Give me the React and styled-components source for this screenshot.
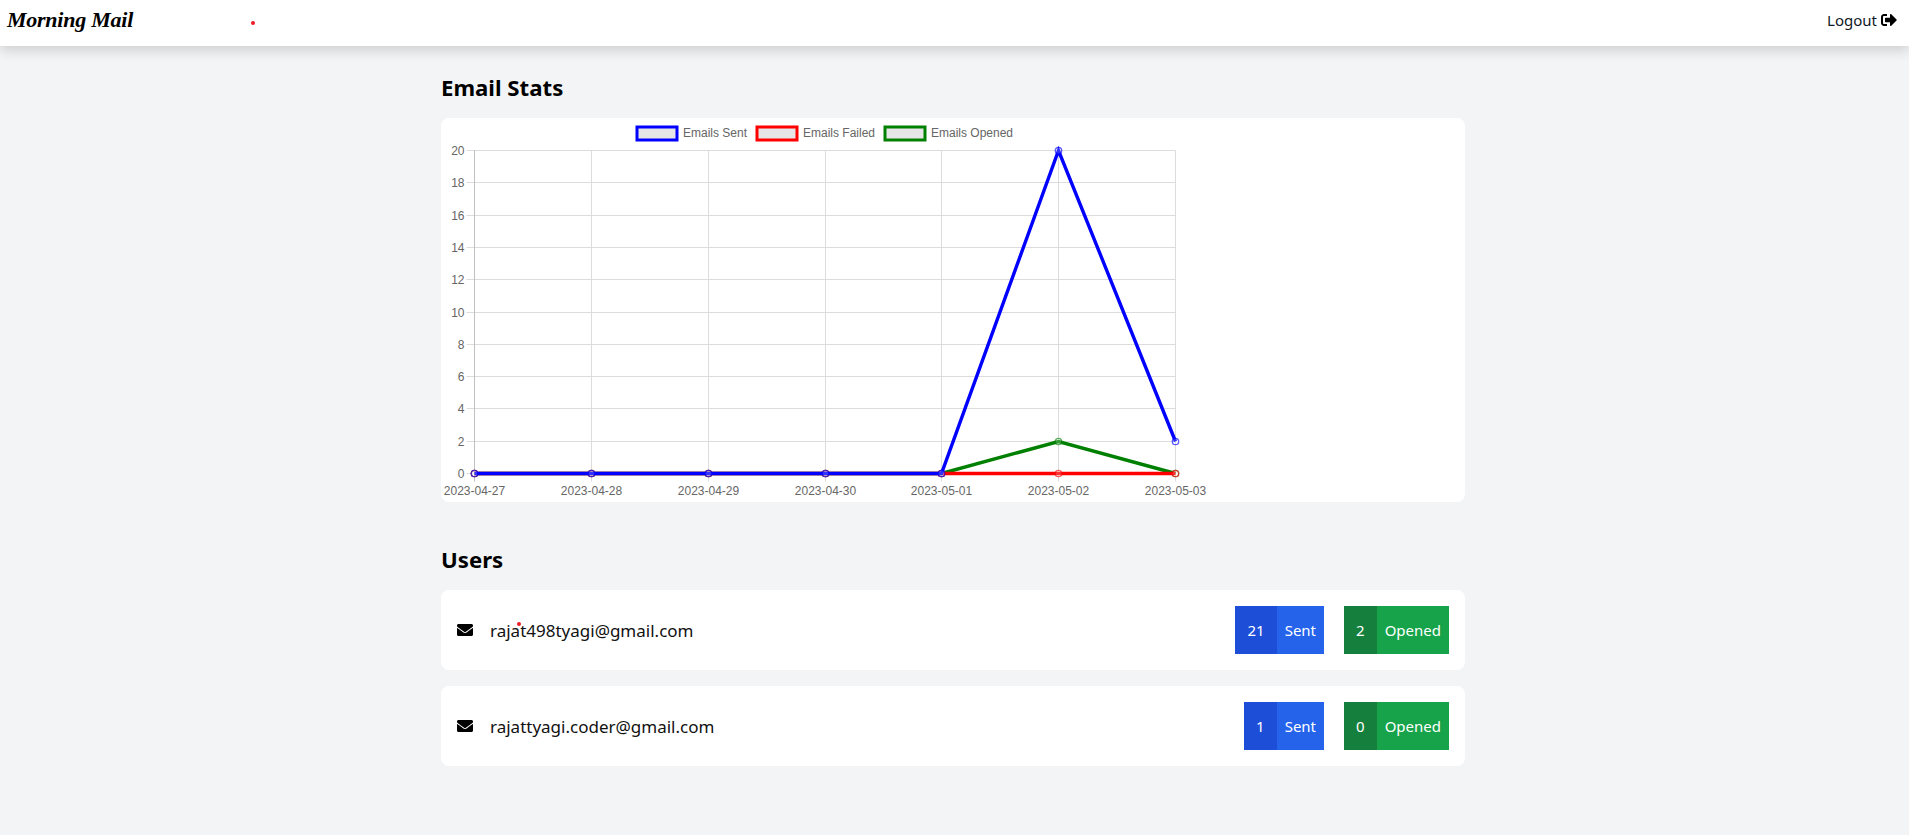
import React from "react";
import styled, { createGlobalStyle } from "styled-components";
import { FaEnvelope, FaSignOutAlt } from "react-icons/fa";

const Global = createGlobalStyle`
  html, body { margin: 0; padding: 0; background: #f3f4f6; }
  body { font-family: "Noto Sans", "Open Sans", sans-serif; color: #000; }
  * { box-sizing: border-box; }
`;

const Page = styled.div`
  position: relative;
  height: 835px;
  overflow: hidden;
`;
const Nav = styled.nav`
  height: 46px;
  background: #fff;
  box-shadow: 0 4px 12px rgba(0, 0, 0, 0.16);
  display: flex;
  align-items: center;
  justify-content: space-between;
  padding: 0 12px 6px 7px;
`;
const Logo = styled.div`
  font-family: "Liberation Serif", serif;
  font-style: italic;
  font-weight: 700;
  font-size: 22px;
  letter-spacing: -0.25px;
  color: #000;
`;
const Logout = styled.div`
  display: flex;
  align-items: center;
  gap: 4px;
  font-size: 15px;
  color: #111827;
  svg { width: 16px; height: 16px; color: #000; }
`;
const Main = styled.main`
  width: 1024px;
  margin-left: 441px;
  padding-top: 26px;
`;
const Title = styled.h2`
  margin: 0 0 14px;
  font-size: 22.2px;
  line-height: 32px;
  font-weight: 700;
`;
const ChartCard = styled.section`
  height: 384px;
  background: #fff;
  border-radius: 8px;
  margin-bottom: 42px;
  svg { display: block; }
`;
const Rows = styled.div`
  display: flex;
  flex-direction: column;
  gap: 16px;
`;
const Row = styled.div`
  height: 80px;
  background: #fff;
  border-radius: 8px;
  display: flex;
  align-items: center;
  padding: 0 16px;
`;
const Mail = styled.div`
  display: flex;
  align-items: center;
  gap: 17px;
  flex: 1;
  font-size: 17px;
  color: #111;
  svg { width: 16px; height: 16px; color: #000; }
`;
const Badges = styled.div`
  display: flex;
  gap: 20px;
`;
const Badge = styled.div`
  display: flex;
  height: 48px;
  line-height: 48px;
  color: #fff;
  font-size: 15px;
`;
const Num = styled.span`
  min-width: 32px;
  padding: 0 12px;
  text-align: center;
  background: ${p => p.$bg};
`;
const Label = styled.span`
  padding: 0 8px;
  background: ${p => p.$bg};
`;
const Dot = styled.span`
  position: absolute;
  left: ${p => p.$x}px;
  top: ${p => p.$y}px;
  width: 4px;
  height: 4px;
  border-radius: 50%;
  background: #ee1c25;
`;

const ox = 441, oy = 118;
const xs = [474.5, 591.5, 708.5, 825.5, 941.5, 1058.5, 1175.5].map(v => v - ox);
const y0 = 473.5 - oy, yTop = 150.5 - oy;
const val = v => Math.floor(y0 - (v / 20) * (y0 - yTop)) + 0.5;
const dates = ["2023-04-27","2023-04-28","2023-04-29","2023-04-30","2023-05-01","2023-05-02","2023-05-03"];
const ticks = [0,2,4,6,8,10,12,14,16,18,20];
const series = [
  { c: "#008000", d: [0,0,0,0,0,2,0] },
  { c: "#ff0000", d: [0,0,0,0,0,0,0] },
  { c: "#0000ff", d: [0,0,0,0,0,20,2] },
];
const legend = [
  { x: 637, tx: 683, c: "#0000ff", t: "Emails Sent" },
  { x: 757, tx: 803, c: "#ff0000", t: "Emails Failed" },
  { x: 885, tx: 931, c: "#008000", t: "Emails Opened" },
];

function Chart() {
  const f = { fontFamily: "Liberation Sans, Arial, sans-serif", fontSize: 12, fill: "#666" };
  return (
    <svg width="1024" height="384" viewBox="0 0 1024 384">
      {ticks.map(t => (
        <line key={t} x1={xs[0] - 8} x2={xs[6]} y1={val(t)} y2={val(t)} stroke="#dcdcdc" />
      ))}
      {xs.map((x, i) => (
        <line key={i} x1={x} x2={x} y1={yTop} y2={y0 + 8} stroke={i === 0 ? "#c0c0c0" : "#dcdcdc"} />
      ))}
      {ticks.map(t => (
        <text key={t} {...f} x={xs[0] - 10} y={val(t) + 4} textAnchor="end">{t}</text>
      ))}
      {dates.map((d, i) => (
        <text key={d} {...f} x={xs[i]} y={377} textAnchor="middle">{d}</text>
      ))}
      {legend.map(l => (
        <g key={l.t}>
          <rect x={l.x - ox} y={127 - oy} width={40} height={13} fill="#e6e6e6" stroke={l.c} strokeWidth="3" />
          <text {...f} x={l.tx - ox} y={137 - oy}>{l.t}</text>
        </g>
      ))}
      {series.map(s => (
        <g key={s.c}>
          <polyline
            fill="none"
            stroke={s.c}
            strokeWidth="3.4"
            strokeLinejoin="miter"
            points={s.d.map((v, i) => `${xs[i]},${val(v)}`).join(" ")}
          />
          {s.d.map((v, i) => (
            <circle key={i} cx={xs[i]} cy={val(v)} r="3.2" fill="rgba(255,255,255,0.2)" stroke={s.c} strokeOpacity="0.65" strokeWidth="1.3" />
          ))}
        </g>
      ))}
    </svg>
  );
}

const users = [
  { email: "rajat498tyagi@gmail.com", sent: 21, opened: 2 },
  { email: "rajattyagi.coder@gmail.com", sent: 1, opened: 0 },
];

export default function App() {
  return (
    <Page>
      <Global />
      <Nav>
        <Logo>Morning Mail</Logo>
        <Logout>Logout <FaSignOutAlt /></Logout>
      </Nav>
      <Main>
        <Title>Email Stats</Title>
        <ChartCard><Chart /></ChartCard>
        <Title>Users</Title>
        <Rows>
          {users.map(u => (
            <Row key={u.email}>
              <Mail><FaEnvelope />{u.email}</Mail>
              <Badges>
                <Badge><Num $bg="#1d4ed8">{u.sent}</Num><Label $bg="#2563eb">Sent</Label></Badge>
                <Badge><Num $bg="#15803d">{u.opened}</Num><Label $bg="#16a34a">Opened</Label></Badge>
              </Badges>
            </Row>
          ))}
        </Rows>
      </Main>
      <Dot $x={251} $y={21} />
      <Dot $x={517} $y={622} />
    </Page>
  );
}
